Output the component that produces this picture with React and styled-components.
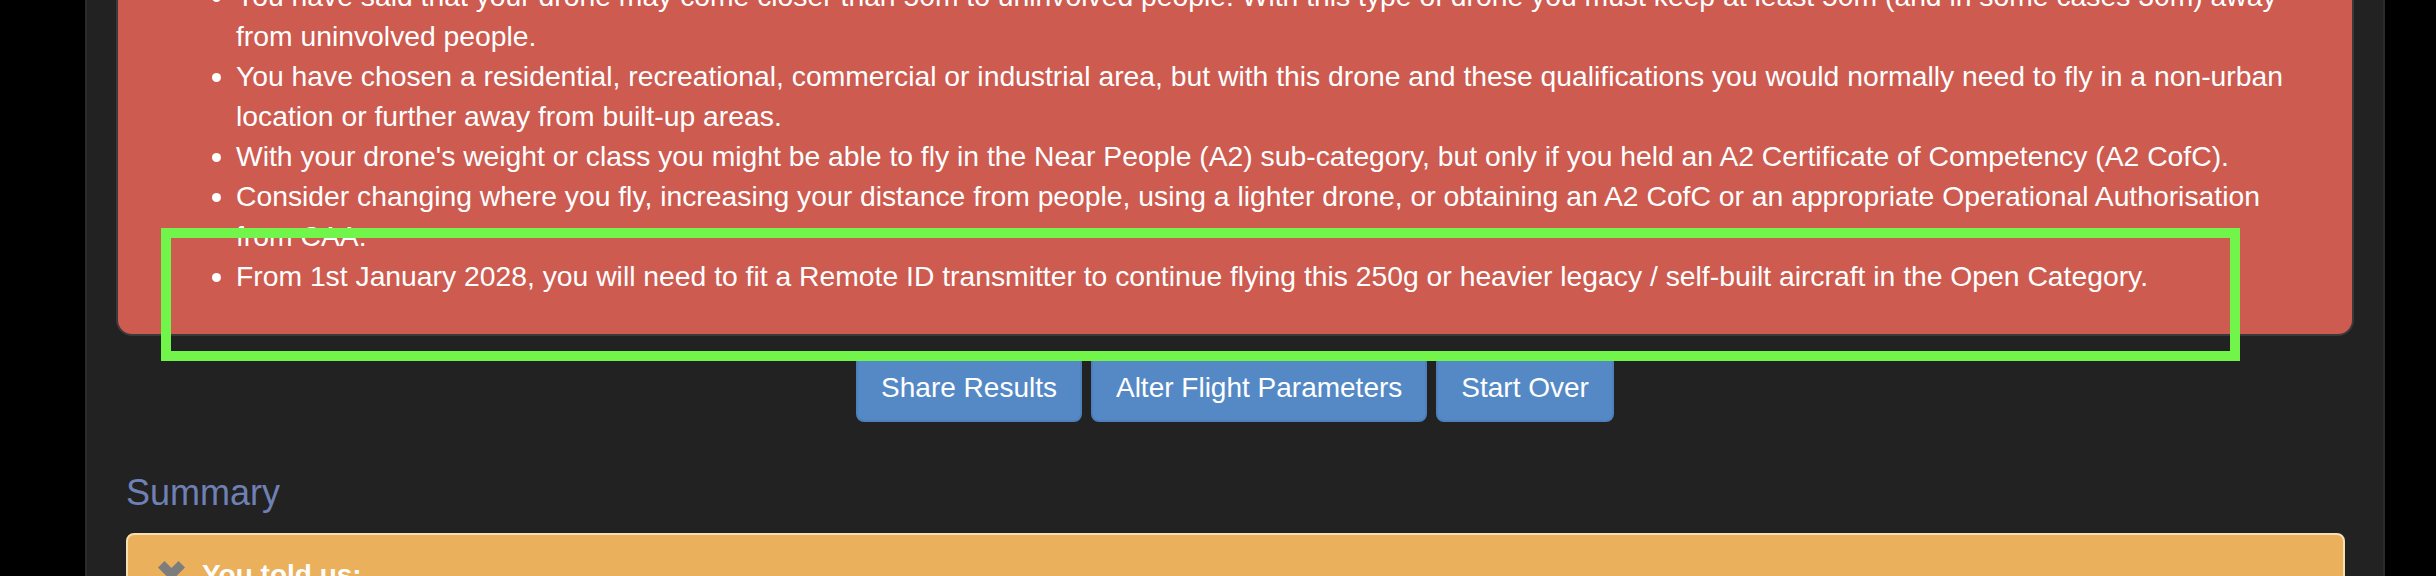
import React from "react";
import styled, { createGlobalStyle } from "styled-components";

const GlobalStyle = createGlobalStyle`
  * { box-sizing: border-box; }
  html, body {
    margin: 0;
    background: #000;
    overflow: hidden;
  }
  body {
    font-family: "Liberation Sans", Arial, Helvetica, sans-serif;
    color: #fff;
  }
`;

const Page = styled.div`
  position: relative;
  height: 576px;
  overflow: hidden;
`;

// the page is scrolled down, so the panel starts above the viewport
const Panel = styled.div`
  margin-top: -56px;
  margin-left: 85px;
  width: 2300px;
  min-height: 700px;
  background: #222;
  border-left: 2px solid #2b2b2b;
  border-right: 2px solid #2b2b2b;
  padding: 0 29px;
`;

const Alert = styled.div`
  background: #cd5b50;
  border: 2px solid #3a3a3a;
  border-radius: 16px;
  padding: 30px 62px 38px 38px;
  font-size: 28.3px;
  line-height: 40px;
  color: #fff;
`;

const List = styled.ul`
  margin: 0;
  padding-left: 80px;
`;

const ButtonRow = styled.div`
  display: flex;
  justify-content: center;
  gap: 9px;
  margin-top: 18px;
`;

const Btn = styled.button`
  background: #5589c6;
  border: 2px solid #4d80bd;
  border-radius: 8px;
  padding: 12px 23px;
  font-family: inherit;
  font-size: 28px;
  line-height: 40px;
  color: #fff;
  cursor: pointer;
`;

const SummaryTitle = styled.h3`
  margin: 51px 9px 20px 10px;
  font-size: 36px;
  line-height: 1.1;
  font-weight: 500;
  color: #6f80b5;
`;

const Card = styled.div`
  margin: 0 9px 0 10px;
  background: #ebb05b;
  border: 2px solid #f6dfb0;
  border-radius: 8px 8px 0 0;
  min-height: 200px;
`;

const CardHeading = styled.div`
  display: flex;
  align-items: flex-start;
  gap: 17px;
  padding: 20px 30px;
  font-size: 28px;
  line-height: 40px;
  font-weight: bold;
  color: #fff;
`;

const Chevron = styled.svg`
  margin-top: 6px;
  flex: none;
`;

const Highlight = styled.div`
  position: absolute;
  left: 161px;
  top: 228px;
  width: 2079px;
  height: 133px;
  border: 10px solid #71f54b;
  pointer-events: none;
`;

const mensajes = [
  "You have said that your drone may come closer than 50m to uninvolved people. With this type of drone you must keep at least 50m (and in some cases 30m) away from uninvolved people.",
  "You have chosen a residential, recreational, commercial or industrial area, but with this drone and these qualifications you would normally need to fly in a non-urban location or further away from built-up areas.",
  "With your drone's weight or class you might be able to fly in the Near People (A2) sub-category, but only if you held an A2 Certificate of Competency (A2 CofC).",
  "Consider changing where you fly, increasing your distance from people, using a lighter drone, or obtaining an A2 CofC or an appropriate Operational Authorisation from CAA.",
  "From 1st January 2028, you will need to fit a Remote ID transmitter to continue flying this 250g or heavier legacy / self-built aircraft in the Open Category.",
];

export default function App() {
  return (
    <Page>
      <GlobalStyle />
      <Panel>
        <Alert>
          <List>
            {mensajes.map((m) => (
              <li key={m}>{m}</li>
            ))}
          </List>
        </Alert>
        <ButtonRow>
          <Btn type="button">Share Results</Btn>
          <Btn type="button">Alter Flight Parameters</Btn>
          <Btn type="button">Start Over</Btn>
        </ButtonRow>
        <SummaryTitle>Summary</SummaryTitle>
        <Card>
          <CardHeading>
            <Chevron width="27" height="20" viewBox="0 0 27 20">
              <polygon points="0,6.5 6.5,0 13.5,7 20.5,0 27,6.5 13.5,20" fill="#7d7d7d" />
            </Chevron>
            You told us:
          </CardHeading>
        </Card>
      </Panel>
      <Highlight />
    </Page>
  );
}
